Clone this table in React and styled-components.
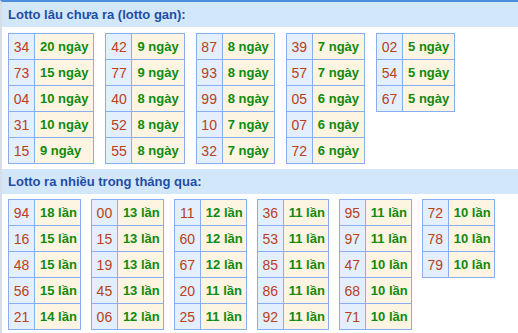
import React from 'react';
import styled, { createGlobalStyle } from 'styled-components';

const GlobalStyle = createGlobalStyle`
  html, body {
    margin: 0;
    padding: 0;
    background: #fff;
  }
  body {
    font-family: "Liberation Sans", Arial, sans-serif;
  }
`;

const Wrapper = styled.div`
  width: 518px;
  height: 333px;
  box-sizing: border-box;
  border-top: 2px solid #4a8fd9;
  border-left: 2px solid #d6dde6;
  overflow: hidden;
`;

const Header = styled.div`
  height: 25px;
  line-height: 26px;
  padding-left: 6px;
  background: #d3e7fb;
  color: #1d4ea6;
  font-size: 13px;
  font-weight: bold;
`;

const Body = styled.div`
  display: flex;
  align-items: flex-start;
  gap: ${(p) => p.$gap}px;
  padding: ${(p) => (p.$first ? '6px 0 5px 6px' : '5px 0 0 6px')};
`;

const Table = styled.table`
  border-collapse: collapse;
  font-size: 13px;
`;

const NumCell = styled.td`
  width: 17px;
  height: 25px;
  padding: 0 4px;
  border: 1px solid #89aef0;
  background: #e3effd;
  color: #b9401c;
  font-size: 14px;
  text-align: center;
  white-space: nowrap;
`;

const ValueCell = styled.td`
  height: 25px;
  padding: 0 ${(p) => p.$padRight}px 0 5px;
  border: 1px solid #89aef0;
  background: #fef4e2;
  color: #108a0e;
  font-weight: bold;
  text-align: left;
  white-space: nowrap;
`;

const gan = [
  [['34', 20], ['73', 15], ['04', 10], ['31', 10], ['15', 9]],
  [['42', 9], ['77', 9], ['40', 8], ['52', 8], ['55', 8]],
  [['87', 8], ['93', 8], ['99', 8], ['10', 7], ['32', 7]],
  [['39', 7], ['57', 7], ['05', 6], ['07', 6], ['72', 6]],
  [['02', 5], ['54', 5], ['67', 5]],
];

const nhieu = [
  [['94', 18], ['16', 15], ['48', 15], ['56', 15], ['21', 14]],
  [['00', 13], ['15', 13], ['19', 13], ['45', 13], ['06', 12]],
  [['11', 12], ['60', 12], ['67', 12], ['20', 11], ['25', 11]],
  [['36', 11], ['53', 11], ['85', 11], ['86', 11], ['92', 11]],
  [['95', 11], ['97', 11], ['47', 10], ['68', 10], ['71', 10]],
  [['72', 10], ['78', 10], ['79', 10]],
];

const StatTable = ({ rows, unit, padRight }) => (
  <Table>
    <tbody>
      {rows.map(([num, count]) => (
        <tr key={num}>
          <NumCell>{num}</NumCell>
          <ValueCell $padRight={padRight}>
            {count} {unit}
          </ValueCell>
        </tr>
      ))}
    </tbody>
  </Table>
);

const App = () => (
  <>
    <GlobalStyle />
    <Wrapper>
      <Header>Lotto lâu chưa ra (lotto gan):</Header>
      <Body $first $gap={11}>
        {gan.map((rows, i) => (
          <StatTable key={i} rows={rows} unit="ngày" padRight={5} />
        ))}
      </Body>
      <Header>Lotto ra nhiều trong tháng qua:</Header>
      <Body $gap={10}>
        {nhieu.map((rows, i) => (
          <StatTable key={i} rows={rows} unit="lần" padRight={3} />
        ))}
      </Body>
    </Wrapper>
  </>
);

export default App;
